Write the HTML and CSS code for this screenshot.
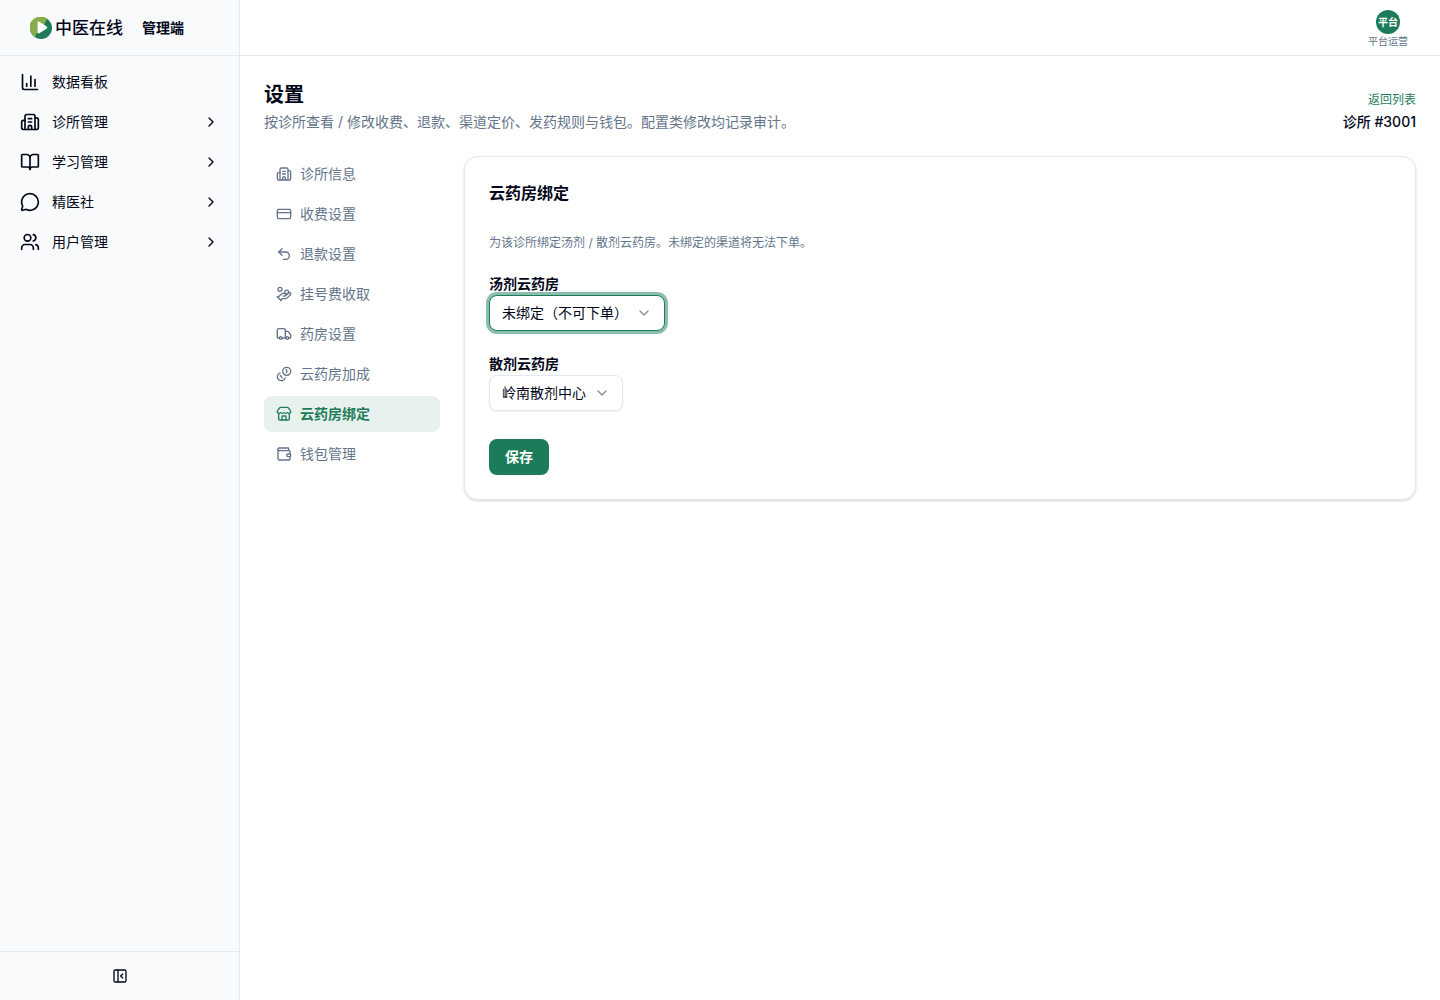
FILE: index.html
```html
<!DOCTYPE html>
<html lang="zh-CN">
<head>
    <meta charset="UTF-8">
    <meta name="viewport" content="width=device-width, initial-scale=1.0">
    <title>设置 - 中医在线管理端</title>
    <link rel="stylesheet" href="styles.css">
</head>
<body>
    <!-- Sidebar -->
    <aside class="sidebar">
        <div class="brand">
            <div class="logo">
                <svg class="logo-mark" viewBox="0 0 22 22">
                    <circle cx="11" cy="11" r="11" fill="#1c7c5a"/>
                    <path d="M5 20.200A11 11 0 1 1 17.500 2.200C15.500 3.500 15 5.500 14.500 8L8 15C6.500 16.500 6 18 5 20.200Z" fill="#86ad49"/>
                    <path d="M7.600 5.800c0-1 .9-1.500 1.800-1l7.200 4.800c.9.600.9 1.500 0 2.100l-7.400 4.500c-.9.500-1.600 0-1.600-1z" fill="#fff"/>
                    <g fill="#7b4b3c">
                        <circle cx="10" cy="18" r=".5"/>
                        <circle cx="13" cy="17" r=".5"/>
                        <circle cx="15.500" cy="15.500" r=".5"/>
                    </g>
                </svg>
                <span class="logo-name">中医在线</span>
            </div>
            <span class="brand-role">管理端</span>
        </div>

        <nav class="main-nav">
            <a href="#">
                <svg class="icon" viewBox="0 0 24 24"><path d="M3 3v16a2 2 0 0 0 2 2h16M18 17V9M13 17V5M8 17v-3"/></svg>
                <span>数据看板</span>
            </a>
            <button type="button">
                <svg class="icon" viewBox="0 0 24 24"><path d="M10 12h4M10 8h4M14 21v-3a2 2 0 0 0-4 0v3"/><path d="M6 10H4a2 2 0 0 0-2 2v7a2 2 0 0 0 2 2h16a2 2 0 0 0 2-2V9a2 2 0 0 0-2-2h-2"/><path d="M6 21V5a2 2 0 0 1 2-2h8a2 2 0 0 1 2 2v16"/></svg>
                <span>诊所管理</span>
                <svg class="icon chevron" viewBox="0 0 24 24"><path d="m9 18 6-6-6-6"/></svg>
            </button>
            <button type="button">
                <svg class="icon" viewBox="0 0 24 24"><path d="M12 7v14"/><path d="M3 18a1 1 0 0 1-1-1V4a1 1 0 0 1 1-1h5a4 4 0 0 1 4 4 4 4 0 0 1 4-4h5a1 1 0 0 1 1 1v13a1 1 0 0 1-1 1h-6a3 3 0 0 0-3 3 3 3 0 0 0-3-3z"/></svg>
                <span>学习管理</span>
                <svg class="icon chevron" viewBox="0 0 24 24"><path d="m9 18 6-6-6-6"/></svg>
            </button>
            <button type="button">
                <svg class="icon" viewBox="0 0 24 24"><path d="M2.992 16.342a2 2 0 0 1 .094 1.167l-1.065 3.290a1 1 0 0 0 1.236 1.168l3.413-.998a2 2 0 0 1 1.099.092 10 10 0 1 0-4.777-4.719"/></svg>
                <span>精医社</span>
                <svg class="icon chevron" viewBox="0 0 24 24"><path d="m9 18 6-6-6-6"/></svg>
            </button>
            <button type="button">
                <svg class="icon" viewBox="0 0 24 24"><path d="M16 21v-2a4 4 0 0 0-4-4H6a4 4 0 0 0-4 4v2M16 3.128a4 4 0 0 1 0 7.744M22 21v-2a4 4 0 0 0-3-3.870"/><circle cx="9" cy="7" r="4"/></svg>
                <span>用户管理</span>
                <svg class="icon chevron" viewBox="0 0 24 24"><path d="m9 18 6-6-6-6"/></svg>
            </button>
        </nav>

        <div class="sidebar-footer">
            <button type="button" class="collapse" aria-label="收起侧栏">
                <svg class="icon" viewBox="0 0 24 24"><rect x="3" y="3" width="18" height="18" rx="2"/><path d="M9 3v18M16 15l-3-3 3-3"/></svg>
            </button>
        </div>
    </aside>

    <div class="page">
        <header class="topbar">
            <button type="button" class="account">
                <span class="avatar">平台</span>
                <span class="account-name">平台运营</span>
            </button>
        </header>

        <main class="content">
            <div class="page-header">
                <div>
                    <h1>设置</h1>
                    <p>按诊所查看 / 修改收费、退款、渠道定价、发药规则与钱包。配置类修改均记录审计。</p>
                </div>
                <div class="clinic">
                    <a href="#">返回列表</a>
                    <span>诊所 #3001</span>
                </div>
            </div>

            <div class="settings">
                <nav class="settings-nav">
                    <a href="#">
                        <svg class="icon" viewBox="0 0 24 24"><path d="M10 12h4M10 8h4M14 21v-3a2 2 0 0 0-4 0v3"/><path d="M6 10H4a2 2 0 0 0-2 2v7a2 2 0 0 0 2 2h16a2 2 0 0 0 2-2V9a2 2 0 0 0-2-2h-2"/><path d="M6 21V5a2 2 0 0 1 2-2h8a2 2 0 0 1 2 2v16"/></svg>
                        诊所信息
                    </a>
                    <a href="#">
                        <svg class="icon" viewBox="0 0 24 24"><rect x="2" y="5" width="20" height="14" rx="2"/><path d="M2 10h20"/></svg>
                        收费设置
                    </a>
                    <a href="#">
                        <svg class="icon" viewBox="0 0 24 24"><path d="M9 14 4 9l5-5"/><path d="M4 9h10.500a5.500 5.500 0 0 1 5.500 5.500a5.500 5.500 0 0 1-5.500 5.500H11"/></svg>
                        退款设置
                    </a>
                    <a href="#">
                        <svg class="icon" viewBox="0 0 24 24"><path d="M11 15h2a2 2 0 1 0 0-4h-3c-.6 0-1.100.2-1.400.6L3 17"/><path d="m7 21 1.600-1.400c.3-.4.8-.6 1.400-.6h4c1.100 0 2.100-.4 2.800-1.200l4.600-4.400a2 2 0 0 0-2.750-2.910l-4.200 3.900"/><path d="m2 16 6 6"/><circle cx="16" cy="9" r="2.900"/><circle cx="6" cy="5" r="3"/></svg>
                        挂号费收取
                    </a>
                    <a href="#">
                        <svg class="icon" viewBox="0 0 24 24"><path d="M14 18V6a2 2 0 0 0-2-2H4a2 2 0 0 0-2 2v11a1 1 0 0 0 1 1h2M15 18H9"/><path d="M19 18h2a1 1 0 0 0 1-1v-3.650a1 1 0 0 0-.22-.624l-3.480-4.350A1 1 0 0 0 17.520 8H14"/><circle cx="17" cy="18" r="2"/><circle cx="7" cy="18" r="2"/></svg>
                        药房设置
                    </a>
                    <a href="#">
                        <svg class="icon" viewBox="0 0 24 24"><path d="M13.744 17.736a6 6 0 1 1-7.480-7.480"/><path d="M15 6h1v4"/><path d="m6.134 14.768.866-.5 2 3.464"/><circle cx="16" cy="8" r="6"/></svg>
                        云药房加成
                    </a>
                    <a href="#" class="active" aria-current="page">
                        <svg class="icon" viewBox="0 0 24 24"><path d="M15 21v-5a1 1 0 0 0-1-1h-4a1 1 0 0 0-1 1v5"/><path d="M17.774 10.310a1.120 1.120 0 0 0-1.549 0 2.500 2.500 0 0 1-3.451 0 1.120 1.120 0 0 0-1.548 0 2.500 2.500 0 0 1-3.452 0 1.120 1.120 0 0 0-1.549 0 2.500 2.500 0 0 1-3.770-3.248l2.889-4.184A2 2 0 0 1 7 2h10a2 2 0 0 1 1.653.873l2.895 4.192a2.500 2.500 0 0 1-3.774 3.244"/><path d="M4 10.950V19a2 2 0 0 0 2 2h12a2 2 0 0 0 2-2v-8.050"/></svg>
                        云药房绑定
                    </a>
                    <a href="#">
                        <svg class="icon" viewBox="0 0 24 24"><path d="M19 7V4a1 1 0 0 0-1-1H5a2 2 0 0 0 0 4h15a1 1 0 0 1 1 1v4h-3a2 2 0 0 0 0 4h3a1 1 0 0 0 1-1v-2a1 1 0 0 0-1-1"/><path d="M3 5v14a2 2 0 0 0 2 2h15a1 1 0 0 0 1-1v-4"/></svg>
                        钱包管理
                    </a>
                </nav>

                <section class="card">
                    <h2>云药房绑定</h2>
                    <form class="bind-form">
                        <p>为该诊所绑定汤剂 / 散剂云药房。未绑定的渠道将无法下单。</p>
                        <div class="field">
                            <label for="decoction">汤剂云药房</label>
                            <div class="select focused">
                                <select id="decoction">
                                    <option>未绑定（不可下单）</option>
                                </select>
                                <svg class="icon" viewBox="0 0 24 24"><path d="m6 9 6 6 6-6"/></svg>
                            </div>
                        </div>
                        <div class="field">
                            <label for="powder">散剂云药房</label>
                            <div class="select">
                                <select id="powder">
                                    <option>岭南散剂中心</option>
                                </select>
                                <svg class="icon" viewBox="0 0 24 24"><path d="m6 9 6 6 6-6"/></svg>
                            </div>
                        </div>
                        <button type="button" class="save">保存</button>
                    </form>
                </section>
            </div>
        </main>
    </div>
</body>
</html>
```
FILE: styles.css
```css
* {
    box-sizing: border-box;
}

body {
    margin: 0;
    display: flex;
    min-height: 100vh;
    font-family: Inter, "Noto Sans CJK SC", sans-serif;
    font-size: 14px;
    line-height: 20px;
    color: #020618;
    background-color: #fff;
}

h1, h2, p {
    margin: 0;
}

a {
    color: inherit;
    text-decoration: none;
}

button, select {
    font: inherit;
    color: inherit;
    cursor: pointer;
}

.icon {
    width: 16px;
    height: 16px;
    flex-shrink: 0;
    fill: none;
    stroke: currentColor;
    stroke-width: 2;
    stroke-linecap: round;
    stroke-linejoin: round;
}

/* Sidebar */
.sidebar {
    width: 240px;
    flex-shrink: 0;
    display: flex;
    flex-direction: column;
    background-color: #f8fafc;
    border-right: 1px solid #e2e8f0;
}

.brand {
    height: 56px;
    display: flex;
    align-items: center;
    gap: 19px;
    padding: 0 30px;
    border-bottom: 1px solid #e2e8f0;
}

.logo {
    display: flex;
    align-items: center;
    gap: 3px;
}

.logo-mark {
    width: 22px;
    height: 22px;
}

.logo-name {
    font-size: 17px;
    font-weight: 500;
}

.brand-role {
    font-weight: 600;
}

.main-nav {
    flex: 1;
    display: flex;
    flex-direction: column;
    gap: 4px;
    padding: 8px;
}

.main-nav a,
.main-nav button {
    display: flex;
    align-items: center;
    gap: 12px;
    height: 36px;
    padding: 0 12px;
    border: none;
    border-radius: 8px;
    background: none;
    text-align: left;
}

.main-nav .icon {
    width: 20px;
    height: 20px;
}

.main-nav .chevron {
    width: 16px;
    height: 16px;
    margin-left: auto;
}

.main-nav a:hover,
.main-nav button:hover {
    background-color: #e8f1ee;
}

.sidebar-footer {
    display: flex;
    justify-content: center;
    padding: 8px;
    border-top: 1px solid #e2e8f0;
}

.collapse {
    display: flex;
    align-items: center;
    justify-content: center;
    width: 32px;
    height: 32px;
    padding: 0;
    border: none;
    background: none;
}

/* Top bar */
.page {
    flex: 1;
    min-width: 0;
}

.topbar {
    height: 56px;
    display: flex;
    align-items: center;
    justify-content: flex-end;
    padding: 0 24px;
    border-bottom: 1px solid #e2e8f0;
}

.account {
    display: flex;
    flex-direction: column;
    align-items: center;
    gap: 1px;
    padding: 2px 8px 0;
    border: none;
    background: none;
    font-size: 10px;
    line-height: 12px;
}

.avatar {
    display: flex;
    align-items: center;
    justify-content: center;
    width: 24px;
    height: 24px;
    border-radius: 50%;
    background-color: #1c7c5a;
    color: #fff;
    font-weight: 600;
}

.account-name {
    color: #64748b;
}

/* Page content */
.content {
    padding: 24px;
}

.page-header {
    display: flex;
    justify-content: space-between;
    align-items: flex-end;
    gap: 16px;
    margin-bottom: 24px;
}

.page-header h1 {
    font-size: 20px;
    line-height: 30px;
    font-weight: 600;
    margin-bottom: 2px;
}

.page-header p {
    color: #64748b;
}

.clinic {
    display: flex;
    flex-direction: column;
    align-items: flex-end;
    gap: 4px;
    font-weight: 500;
}

.clinic a {
    font-size: 12px;
    line-height: 16px;
    font-weight: 400;
    color: #1c7c5a;
}

.settings {
    display: grid;
    grid-template-columns: 176px 1fr;
    align-items: start;
    gap: 24px;
}

.settings-nav {
    display: flex;
    flex-direction: column;
    gap: 4px;
}

.settings-nav a {
    display: flex;
    align-items: center;
    gap: 8px;
    padding: 8px 12px;
    border-radius: 8px;
    color: #64748b;
}

.settings-nav a.active {
    background-color: #e8f1ee;
    color: #1c7c5a;
    font-weight: 600;
}

/* Pharmacy binding */
.card {
    padding: 24px;
    border: 1px solid #e2e8f0;
    border-radius: 14px;
    box-shadow: 0 1px 3px rgba(0, 0, 0, 0.1), 0 1px 2px rgba(0, 0, 0, 0.1);
}

.card h2 {
    font-size: 16px;
    line-height: 24px;
    font-weight: 600;
    margin-bottom: 30px;
}

.bind-form {
    display: flex;
    flex-direction: column;
    align-items: flex-start;
    gap: 24px;
}

.bind-form p {
    font-size: 12px;
    line-height: 16px;
    color: #64748b;
}

.field label {
    display: block;
    line-height: 18px;
    margin-bottom: 2px;
    font-weight: 600;
}

.select {
    display: inline-block;
    position: relative;
    vertical-align: top;
}

.select select {
    appearance: none;
    display: block;
    height: 36px;
    padding: 0 36px 0 12px;
    border: 1px solid #e2e8f0;
    border-radius: 8px;
    background-color: #fff;
    box-shadow: 0 1px 2px rgba(0, 0, 0, 0.05);
    outline: none;
}

.select.focused select,
.select select:focus {
    border-color: #1c7c5a;
    box-shadow: 0 0 0 3px rgba(28, 124, 90, 0.5);
}

/* arrow sits over the select */
.select .icon {
    position: absolute;
    top: 10px;
    right: 13px;
    color: #64748b;
    opacity: 0.8;
    pointer-events: none;
}

.save {
    height: 36px;
    margin-top: 4px;
    padding: 0 16px;
    border: none;
    border-radius: 8px;
    background-color: #1c7c5a;
    color: #fff;
    font-weight: 600;
}
```
